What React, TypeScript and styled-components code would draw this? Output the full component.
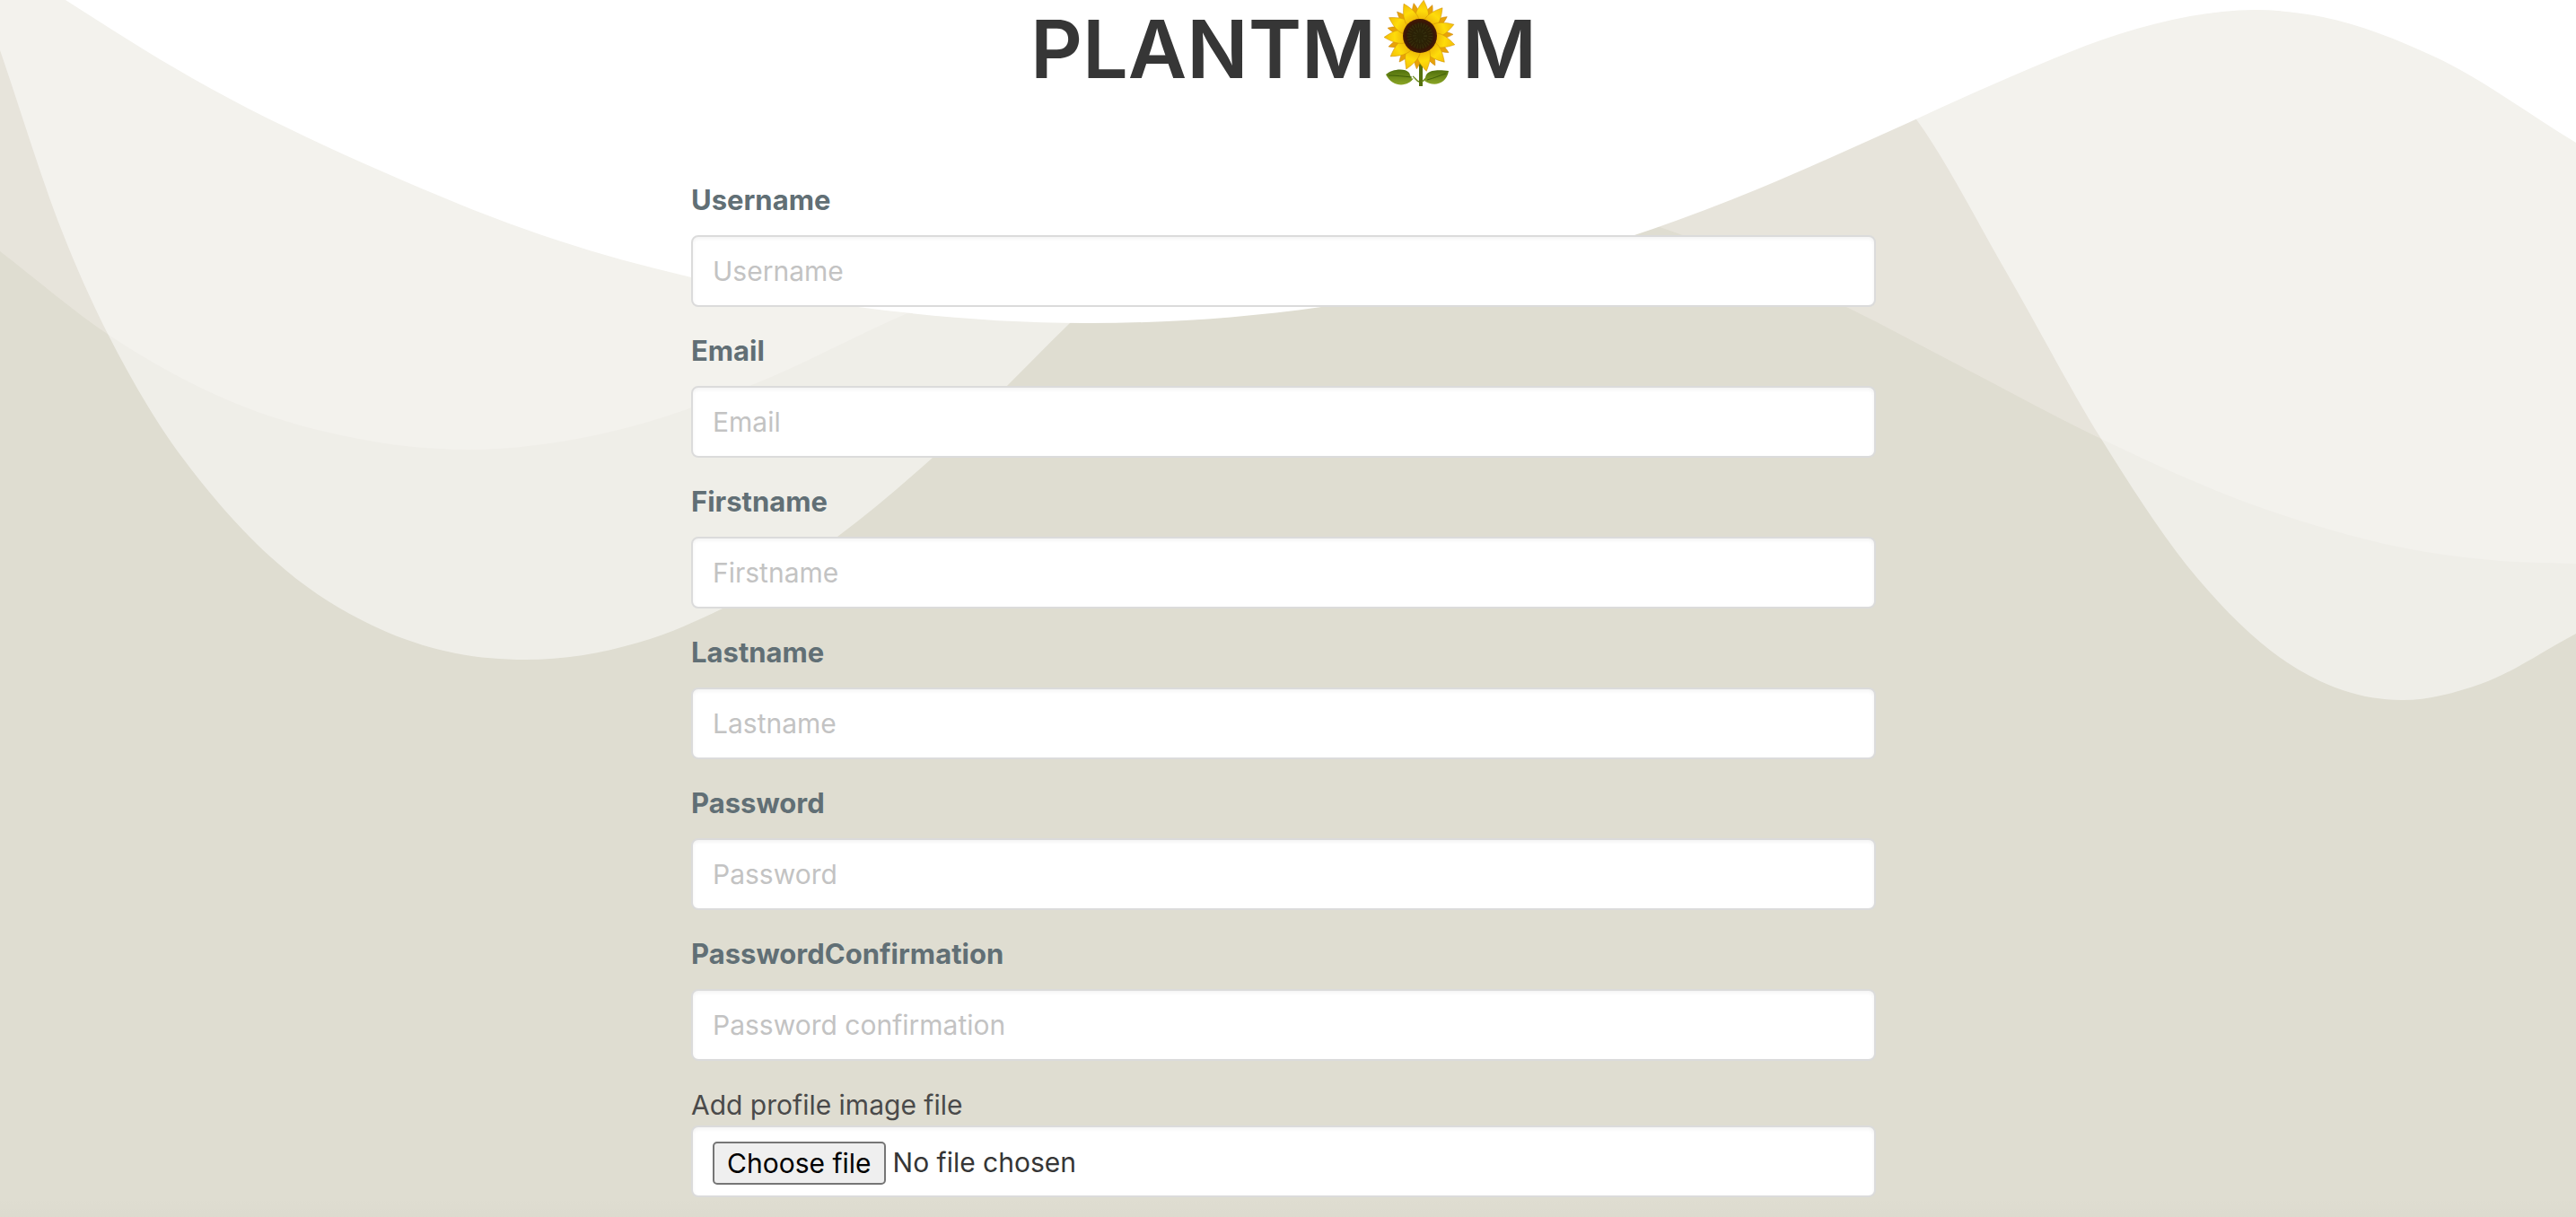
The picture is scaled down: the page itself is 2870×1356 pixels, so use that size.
import React, { useId, useRef, useState } from "react";
import styled, { createGlobalStyle } from "styled-components";

type Point = [number, number];

const WAVE_WIDTH = 2870;
const WAVE_HEIGHT = 800;

const frontCrest: Point[] = [
  [0, -48], [73, 0], [214, 87], [428, 192], [622, 268], [770, 309], [956, 342], [1208, 360], [1472, 342],
  [1650, 308], [1821, 262], [1960, 210], [2090, 153], [2239, 86], [2361, 38], [2440, 18], [2513, 11], [2588, 19],
  [2712, 63], [2870, 159],
];

const deepCrest: Point[] = [
  [0, 56], [70, 260], [159, 443], [244, 561], [318, 635], [413, 696], [490, 724], [585, 735], [711, 716],
  [805, 678], [933, 598], [1039, 510], [1192, 360], [1400, 160], [1640, 10], [1860, -30], [2020, 20], [2135, 133],
  [2234, 301], [2341, 489], [2448, 644], [2548, 738], [2610, 769], [2675, 780], [2764, 762], [2870, 706],
];

const softCrest: Point[] = [
  [0, 280], [124, 375], [259, 448], [380, 485], [520, 501], [672, 483], [835, 430], [1011, 349], [1240, 260],
  [1460, 205], [1660, 205], [1849, 253], [2057, 342], [2190, 411], [2341, 489], [2523, 567], [2697, 614],
  [2787, 625], [2870, 628],
];

/* Smooth curve through every point, closed along the top of the drawing. */
function wavePath(points: Point[]): string {
  const last = points.length - 1;
  const rise = (i: number) => (points[i + 1][1] - points[i][1]) / (points[i + 1][0] - points[i][0]);
  const run = (i: number) => points[i + 1][0] - points[i][0];
  const slope = (i: number) => {
    if (i === 0) return rise(0);
    if (i === last) return rise(last - 1);
    return (run(i) * rise(i - 1) + run(i - 1) * rise(i)) / (run(i - 1) + run(i));
  };
  let d = `M0,-60L${points[0].join(",")}`;
  for (let i = 0; i < last; i += 1) {
    const [x0, y0] = points[i];
    const [x1, y1] = points[i + 1];
    const third = (x1 - x0) / 3;
    d += `C${x0 + third},${y0 + slope(i) * third} ${x1 - third},${y1 - slope(i + 1) * third} ${x1},${y1}`;
  }
  return `${d}L${WAVE_WIDTH},-60Z`;
}

const GlobalStyle = createGlobalStyle`
  *, *::before, *::after { box-sizing: border-box; }
  html, body { margin: 0; padding: 0; }
  body {
    background: #dfddd1;
    color: #4a4a4a;
    font-family: Inter, "Liberation Sans", sans-serif;
    font-size: 30px;
    line-height: 46px;
  }
`;

const Page = styled.div`
  position: relative;
  min-height: 100vh;
  padding-right: 10px;
  overflow: hidden;
  background: linear-gradient(to top, rgba(10, 10, 10, 0.01), rgba(10, 10, 10, 0) 22px);
`;

const Backdrop = styled.svg`
  position: absolute;
  top: 0;
  left: 0;
  width: 100%;
  height: auto;
  z-index: -1;
`;

const Header = styled.header`
  display: flex;
  justify-content: center;
`;

const Title = styled.h1`
  display: flex;
  align-items: flex-start;
  margin: 0;
  color: #363636;
  font-size: 90px;
  font-weight: 600;
  line-height: 109px;
`;

const Flower = styled.svg`
  width: 90px;
  height: 102px;
  margin: 0 1px 0 5px;
`;

const Form = styled.form`
  display: flex;
  flex-direction: column;
  gap: 24px;
  width: 100%;
  max-width: 1320px;
  margin: 0 auto;
  padding: 89px 0 22px;
`;

const FieldBox = styled.div<{ $gap: number }>`
  display: flex;
  flex-direction: column;
  gap: ${({ $gap }) => $gap}px;
`;

const Label = styled.label`
  padding-top: 2px;
  color: #616f75;
  font-size: 31px;
  font-weight: 700;
`;

const FileCaption = styled.label`
  padding-top: 2px;
  color: #4a4a4a;
`;

const TextInput = styled.input`
  width: 100%;
  height: 80px;
  padding: 0 22px;
  border: 2px solid #dbdbdb;
  border-radius: 8px;
  background: #fff;
  box-shadow: inset 0 2px 4px rgba(10, 10, 10, 0.05);
  color: #363636;
  font: inherit;
  outline: none;

  &::placeholder {
    color: #c3c3c3;
    opacity: 1;
  }
`;

const FilePicker = styled.div`
  display: flex;
  align-items: flex-start;
  gap: 8px;
  height: 80px;
  padding: 16px 22px;
  border: 2px solid #dbdbdb;
  border-radius: 8px;
  background: #fff;
  box-shadow: inset 0 2px 4px rgba(10, 10, 10, 0.05);
  color: #363636;
`;

const FileButton = styled.button`
  height: 48px;
  padding: 0 14px;
  border: 2px solid #767676;
  border-radius: 5px;
  background: #efefef;
  color: #000;
  font: inherit;
  line-height: 42px;
`;

const FileName = styled.span``;

function Sunflower() {
  const ring = (count: number, offset: number) =>
    Array.from({ length: count }, (_, i) => offset + (i * 360) / count);
  return (
    <Flower viewBox="0 0 90 102" role="img" aria-label="sunflower">
      <defs>
        <linearGradient id="petal" x1="0" y1="0" x2="0" y2="1">
          <stop offset="0" stopColor="#f3bd08" />
          <stop offset="0.35" stopColor="#fedc0a" />
          <stop offset="1" stopColor="#dd8f05" />
        </linearGradient>
        <radialGradient id="seeds">
          <stop offset="0" stopColor="#2a2406" />
          <stop offset="0.65" stopColor="#2b1f05" />
          <stop offset="0.85" stopColor="#3a1606" />
          <stop offset="1" stopColor="#4a1c05" />
        </radialGradient>
        <linearGradient id="leaf" x1="0" y1="0" x2="0" y2="1">
          <stop offset="0" stopColor="#4f6f0c" />
          <stop offset="1" stopColor="#8aa526" />
        </linearGradient>
      </defs>
      <path d="M43 68h4v28h-4z" fill="#55700d" />
      <path d="M43 91c-3-1-4-4-7-6M46 91c3-1 4-4 6-5" fill="none" stroke="#6b8a1c" strokeWidth="1.5" />
      <path d="M6 83c6-6 21-8 26-2 2 4 2 8 5 6-5 9-23 12-31-4z" fill="url(#leaf)" />
      <path d="M76 79c-8-1-19-2-24 3-3 4-1 5-3 8 8 6 24 6 27-11z" fill="url(#leaf)" />
      <path d="M9 84c8 0 16 1 26 2M73 82c-7 2-13 5-21 7" fill="none" stroke="#3f5f08" strokeWidth="1" />
      {ring(11, 22).map((angle) => (
        <path key={angle} d="M44 30C37 23 39 12 44 3C49 12 51 23 44 30z" fill="#e8a208" stroke="#c98205" strokeWidth="0.5" transform={`rotate(${angle} 44 40)`} />
      ))}
      {ring(11, 6).map((angle) => (
        <path key={angle} d="M44 34C31 24 37 11 44 0C51 11 57 24 44 34z" fill="url(#petal)" stroke="#cf8f06" strokeWidth="0.5" transform={`rotate(${angle} 44 40)`} />
      ))}
      <ellipse cx="44" cy="40" rx="19" ry="19" fill="url(#seeds)" />
      <circle cx="44" cy="40" r="12" fill="none" stroke="#3a300c" strokeWidth="5" strokeDasharray="1 2" />
      <circle cx="44" cy="40" r="6" fill="none" stroke="#35300f" strokeWidth="4" strokeDasharray="1 2" />
    </Flower>
  );
}

interface FieldProps {
  label: string;
  placeholder: string;
  type?: string;
}

function Field({ label, placeholder, type = "text" }: FieldProps) {
  const id = useId();
  return (
    <FieldBox $gap={16}>
      <Label htmlFor={id}>{label}</Label>
      <TextInput id={id} type={type} placeholder={placeholder} />
    </FieldBox>
  );
}

function ImageField() {
  const id = useId();
  const input = useRef<HTMLInputElement>(null);
  const [name, setName] = useState("");
  return (
    <FieldBox $gap={0}>
      <FileCaption htmlFor={id}>Add profile image file</FileCaption>
      <FilePicker>
        <input
          ref={input}
          id={id}
          type="file"
          accept="image/*"
          hidden
          onChange={(event) => setName(event.target.files?.[0]?.name ?? "")}
        />
        <FileButton type="button" onClick={() => input.current?.click()}>
          Choose file
        </FileButton>
        <FileName>{name || "No file chosen"}</FileName>
      </FilePicker>
    </FieldBox>
  );
}

const fields: FieldProps[] = [
  { label: "Username", placeholder: "Username" },
  { label: "Email", placeholder: "Email", type: "email" },
  { label: "Firstname", placeholder: "Firstname" },
  { label: "Lastname", placeholder: "Lastname" },
  { label: "Password", placeholder: "Password", type: "password" },
  { label: "PasswordConfirmation", placeholder: "Password confirmation", type: "password" },
];

export default function App() {
  return (
    <>
      <GlobalStyle />
      <Page>
        <Backdrop viewBox={`0 0 ${WAVE_WIDTH} ${WAVE_HEIGHT}`} aria-hidden="true">
          <path d={wavePath(softCrest)} fill="#fff8f8" fillOpacity="0.27" />
          <path d={wavePath(deepCrest)} fill="#fff" fillOpacity="0.5" />
          <path d={wavePath(frontCrest)} fill="#fff" />
        </Backdrop>
        <Header>
          <Title>
            PLANTM
            <Sunflower />M
          </Title>
        </Header>
        <Form onSubmit={(event) => event.preventDefault()}>
          {fields.map((field) => (
            <Field key={field.label} {...field} />
          ))}
          <ImageField />
        </Form>
      </Page>
    </>
  );
}
